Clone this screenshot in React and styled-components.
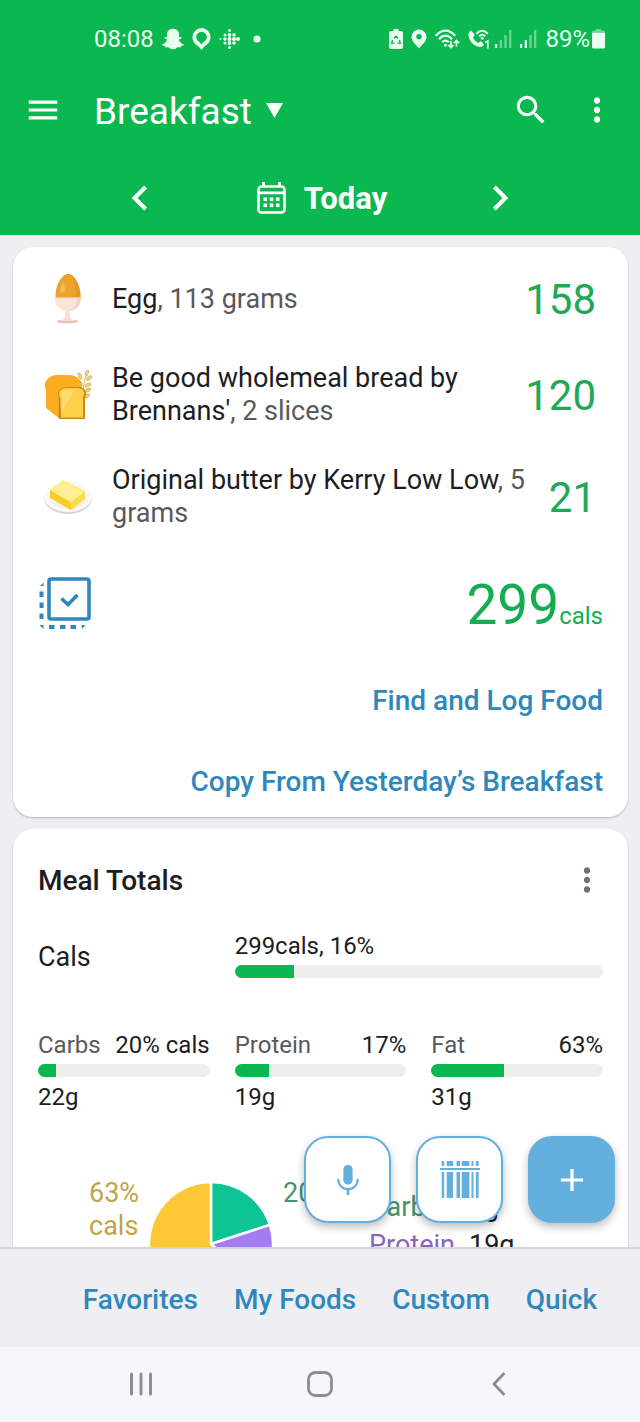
import React from "react";
import styled, { createGlobalStyle } from "styled-components";
import { FaSnapchatGhost } from "react-icons/fa";
import {
  MdAdd,
  MdChevronLeft,
  MdChevronRight,
  MdMenu,
  MdMoreVert,
  MdSearch,
} from "react-icons/md";

const GlobalStyle = createGlobalStyle`
  *, *::before, *::after { box-sizing: border-box; }
  body {
    margin: 0;
    background: #efeef3;
    color: #1d1d1f;
    font-family: Roboto, "Liberation Sans", sans-serif;
    font-size: 27px;
    line-height: 33px;
  }
  button, select { font: inherit; color: inherit; }
  svg { display: block; flex: none; }
`;

const Screen = styled.div`
  display: flex;
  flex-direction: column;
  height: 100vh;
`;

/* ---------- Header ---------- */

const Header = styled.header`
  flex: none;
  background: #0bb850;
  color: #fff;
`;

const StatusBar = styled.div`
  display: flex;
  justify-content: space-between;
  align-items: center;
  height: 78px;
  padding: 0 35px 0 94px;
  font-size: 24px;
  color: #e9fdf0;
`;

const StatusGroup = styled.div`
  display: flex;
  align-items: center;
  gap: ${(p) => p.$gap}px;
`;

const TitleBar = styled.div`
  display: flex;
  align-items: center;
  height: 64px;
  padding: 0 24px;
`;

const IconButton = styled.button`
  display: flex;
  align-items: center;
  justify-content: center;
  flex: none;
  width: ${(p) => p.$width || 38}px;
  height: ${(p) => p.$height || 38}px;
  padding: 0;
  border: 0;
  background: none;
  color: ${(p) => p.$color || "inherit"};
  cursor: pointer;
`;

const MealPicker = styled.label`
  display: flex;
  align-items: center;
  gap: 14px;
  margin: 0 auto 0 32px;
`;

const MealSelect = styled.select`
  appearance: none;
  padding: 4px 0 0;
  border: 0;
  background: none;
  font-size: 37px;
  line-height: 44px;
  cursor: pointer;

  option { color: #1d1d1f; }
`;

const TitleActions = styled.div`
  display: flex;
  gap: 28px;
`;

const DateBar = styled.div`
  display: grid;
  grid-template-columns: repeat(3, 1fr);
  place-items: center;
  height: 74px;
  margin-top: 19px;
  padding: 0 50px;
`;

const DateButton = styled.button`
  display: flex;
  align-items: center;
  gap: 18px;
  padding: 0 0 0 4px;
  border: 0;
  background: none;
  font-size: 31px;
  font-weight: 700;
  cursor: pointer;
`;

/* ---------- Content ---------- */

const Content = styled.div`
  position: relative;
  flex: 1;
  min-height: 0;
`;

const Scroller = styled.main`
  display: flex;
  flex-direction: column;
  gap: 12px;
  height: 100%;
  padding: 12px 12px 24px 13px;
  overflow-y: auto;
  scrollbar-width: none;
`;

const Card = styled.section`
  flex: none;
  padding: ${(p) => p.$padding};
  border-radius: 20px;
  background: #fff;
  box-shadow: 0 1px 2px rgba(30, 30, 50, 0.28);
`;

const FoodList = styled.ul`
  margin: 0;
  padding: 0;
  list-style: none;
`;

const FoodRow = styled.li`
  display: flex;
  align-items: center;
  min-height: 90px;
  padding: 18px 7px 18px 5px;
`;

const FoodIcon = styled.div`
  display: flex;
  justify-content: center;
  flex: none;
  width: 50px;
  margin-right: 19px;
`;

const FoodName = styled.p`
  flex: 1;
  margin: 0;
`;

const Amount = styled.span`
  color: #59595c;
`;

const FoodCals = styled.span`
  margin-left: 12px;
  font-size: 42px;
  color: #1fa956;
`;

const TotalRow = styled.div`
  display: flex;
  align-items: center;
  justify-content: space-between;
  height: 112px;
`;

const Total = styled.p`
  margin: 0;
  padding-top: 12px;
  font-size: 55px;
  line-height: 64px;
  color: #14ad52;
`;

const TotalUnit = styled.span`
  font-size: 24px;
`;

const LinkList = styled.div`
  display: flex;
  flex-direction: column;
  align-items: flex-end;
  gap: 48px;
  padding: 24px 0 19px;
`;

const TextLink = styled.a`
  color: #2f88bb;
  font-size: 28px;
  font-weight: 500;
  text-decoration: none;
`;

const CardHeader = styled.div`
  display: flex;
  align-items: center;
  justify-content: space-between;
  height: 40px;
`;

const CardTitle = styled.h2`
  margin: 0;
  font-size: 28px;
  font-weight: 500;
`;

const CalsRow = styled.div`
  display: grid;
  grid-template-columns: repeat(3, 1fr);
  column-gap: 25px;
  align-items: center;
  margin-top: 31px;
`;

const CalsMeter = styled.div`
  grid-column: span 2;
  font-size: 24px;
  line-height: 30px;
`;

const Macros = styled.div`
  display: grid;
  grid-template-columns: repeat(3, 1fr);
  column-gap: 25px;
  margin-top: 47px;
`;

const Macro = styled.div`
  font-size: 24px;
  line-height: 30px;
`;

const MacroHead = styled.div`
  display: flex;
  justify-content: space-between;
`;

const Track = styled.div`
  height: 13px;
  margin: 4px 0 5px;
  border-radius: 7px;
  background: #eeeeef;
  overflow: hidden;
`;

const Fill = styled.div`
  height: 100%;
  background: #0bb850;
`;

const Breakdown = styled.div`
  display: flex;
  align-items: flex-start;
  gap: 10px;
  margin-top: 65px;
  padding-left: 51px;
`;

const SliceLabel = styled.div`
  flex: none;
  width: ${(p) => p.$width}px;
  color: ${(p) => p.$color};
  white-space: ${(p) => (p.$nowrap ? "nowrap" : "normal")};
`;

const PieFrame = styled.div`
  padding-top: 5px;
`;

const Legend = styled.dl`
  margin: 0;
  padding-top: 11px;
`;

const LegendRow = styled.div`
  display: flex;
  gap: 14px;
  line-height: 38px;
`;

const LegendName = styled.dt`
  color: ${(p) => p.$color};
`;

const LegendValue = styled.dd`
  margin: 0;
`;

/* Buttons that float above the scrolling cards. */
const FloatingActions = styled.div`
  position: absolute;
  right: 25px;
  bottom: 24px;
  display: flex;
  gap: 25px;
`;

const Fab = styled.button`
  display: flex;
  align-items: center;
  justify-content: center;
  width: 87px;
  height: 87px;
  padding: 0;
  border: 2px solid #63afdd;
  border-radius: 24px;
  background: ${(p) => (p.$primary ? "#63afdd" : "#fff")};
  color: ${(p) => (p.$primary ? "#fff" : "#63afdd")};
  box-shadow: 0 4px 8px rgba(0, 0, 0, 0.26);
  cursor: pointer;
`;

/* ---------- Bottom bars ---------- */

const TabBar = styled.nav`
  display: flex;
  flex: none;
  align-items: center;
  justify-content: flex-end;
  gap: 36px;
  height: 100px;
  padding: 2px 43px 0;
  border-top: 2px solid #d5d4da;
  background: #efeef3;
`;

const SystemBar = styled.div`
  display: grid;
  flex: none;
  grid-template-columns: repeat(3, 1fr);
  place-items: center;
  height: 75px;
  padding: 0 52px 2px;
  background: #f4f8fd;
`;

/* ---------- Icons ---------- */

const LocationRing = () => (
  <svg width="19" height="22" viewBox="0 0 19 22" fill="currentColor" fillRule="evenodd">
    <path d="M9.5 0a9 9 0 0 1 9 9c0 4.500-2.600 7.600-6 9.300L9.500 22 6.500 18.300C3.100 16.600.5 13.500.5 9a9 9 0 0 1 9-9zm0 3.700A5.300 5.300 0 0 0 4.200 9c0 3.400 3.500 4.700 5.300 7.500 1.800-2.800 5.300-4.100 5.300-7.500a5.300 5.300 0 0 0-5.300-5.300z" />
  </svg>
);

const FITBIT_DOTS = [
  [1.5, 11, 1],
  [6, 7, 1.5], [6, 11, 1.7], [6, 15, 1.5],
  [10.5, 2.5, 1.5], [10.5, 7, 1.9], [10.5, 11, 2], [10.5, 15, 1.9], [10.5, 19.5, 1.5],
  [15, 7, 1.8], [15, 11, 2.1], [15, 15, 1.8],
  [19, 11, 2],
];

const FitnessDots = () => (
  <svg width="21" height="22" viewBox="0 0 21 22" fill="currentColor">
    {FITBIT_DOTS.map(([cx, cy, r]) => (
      <circle key={`${cx}-${cy}`} cx={cx} cy={cy} r={r} />
    ))}
  </svg>
);

const StatusDot = () => (
  <svg width="18" height="8" viewBox="0 0 18 8" fill="currentColor">
    <circle cx="9" cy="4" r="3.6" />
  </svg>
);

const BatterySaver = () => (
  <svg width="14" height="20" viewBox="0 0 14 20">
    <path d="M4.500 0h5v2H12a2 2 0 0 1 2 2v14a2 2 0 0 1-2 2H2a2 2 0 0 1-2-2V4a2 2 0 0 1 2-2h2.500z" fill="currentColor" />
    <path d="M5 9.500 7 7l2 2.500M10.300 11l1.200 3.200H8.500M5.500 14.200h-3L3.700 11" fill="none" stroke="#0bb850" strokeWidth="1.300" />
  </svg>
);

const LocationPin = () => (
  <svg width="16" height="20" viewBox="0 0 16 20" fill="currentColor" fillRule="evenodd">
    <path d="M8 .5A7.500 7.500 0 0 0 .5 8c0 5 5.500 8.500 7.500 11.500 2-3 7.500-6.500 7.500-11.500A7.500 7.500 0 0 0 8 .5zm0 4.500a2.700 2.700 0 1 1 0 5.400A2.700 2.700 0 0 1 8 5z" />
  </svg>
);

const WifiActive = () => (
  <svg width="25" height="20" viewBox="0 0 25 20" fill="none" stroke="currentColor" strokeWidth="2.200">
    <path d="M.8 6.800C6.500-.2 14.500-.2 20.200 6.800" />
    <path d="M4 10.200c4-4.700 9-4.700 13 0" />
    <path d="M7.200 13.300c2-2.200 4.600-2.200 6.600 0" />
    <circle cx="10.500" cy="16.200" r="1.500" fill="currentColor" stroke="none" />
    <path d="M16 12v6M13.500 15.800l2.500 2.700 2.500-2.700M21.500 17.500V12M19 14.200l2.500-2.700 2.500 2.700" strokeWidth="1.700" />
  </svg>
);

const WifiCalling = () => (
  <svg width="22" height="20" viewBox="0 0 22 20">
    <path d="M3.500 1.500 6.800 6 4.900 8.500c1.200 2.500 3 4.300 5.400 5.400l2.500-1.900 3.200 3.500c-.8 2-2.700 2.800-4.800 2.400C5.500 16.800 1 12 .4 6.300.3 4 1.500 2.200 3.500 1.500z" fill="currentColor" />
    <path d="M8.500 5c3-4.200 8.200-4.200 11.200 0M11.300 7.500c1.700-2.200 4.200-2.200 5.900 0" fill="none" stroke="currentColor" strokeWidth="2" />
    <circle cx="14.200" cy="9.300" r="1.400" fill="currentColor" />
    <path d="M17 13.500l2.800-1.500v7.500" fill="none" stroke="currentColor" strokeWidth="1.700" />
  </svg>
);

const Signal = ({ level }) => (
  <svg width="17" height="18" viewBox="0 0 17 18" fill="currentColor">
    {[4, 8, 13, 18].map((height, i) => (
      <rect key={height} x={i * 4.7} y={18 - height} width="2.200" height={height} opacity={i < level ? 1 : 0.45} />
    ))}
  </svg>
);

const Battery = () => (
  <svg width="13" height="20" viewBox="0 0 13 20" fill="currentColor">
    <path d="M4 0h5v1.500h2.500A1.500 1.500 0 0 1 13 3H0a1.500 1.500 0 0 1 1.500-1.500H4z" opacity="0.45" />
    <path d="M0 3.500h13V18a1.500 1.500 0 0 1-1.500 1.500h-10A1.500 1.500 0 0 1 0 18z" />
  </svg>
);

const Caret = () => (
  <svg width="17" height="15" viewBox="0 0 17 15" fill="currentColor">
    <path d="M0 0h17L8.500 15z" />
  </svg>
);

const CalendarIcon = () => (
  <svg width="29" height="32" viewBox="0 0 29 32">
    <rect x="1.500" y="4.500" width="26" height="26" rx="3" fill="none" stroke="currentColor" strokeWidth="2.600" />
    <path d="M6.500 0v5M22.500 0v5M2 10.800h25" stroke="currentColor" strokeWidth="2.800" />
    <g fill="currentColor">
      {[6.5, 12.7, 18.9].map((x) => (
        <React.Fragment key={x}>
          <rect x={x} y="15.500" width="3.600" height="3.600" />
          <rect x={x} y="21.500" width="3.600" height="3.600" />
        </React.Fragment>
      ))}
    </g>
  </svg>
);

const EggIcon = () => (
  <svg width="28" height="50" viewBox="0 0 28 50">
    <ellipse cx="13.500" cy="47.300" rx="11" ry="1.900" fill="#e9bfae" />
    <path d="M11.500 35h4l.8 9c.5 1.500 3 2 6 3H5c3-1 5-1.500 5.500-3z" fill="#f8dfd2" />
    <path d="M1.500 24C1 10 8.500 0 14 0s13 10 12.500 24z" fill="#eda22c" />
    <path d="M14 0c7 3 8 15 7 24h5.500C27 10 19.500 0 14 0z" fill="#e6992a" />
    <path d="M9.500 8c-3 3-4.500 8-2.500 10.500 2 1.200 4-1 4-4z" fill="#f4ba5c" />
    <path d="M1 23.500h25.500C27.500 32 21 37 14 37S0 32 1 23.500z" fill="#fbe3d7" />
    <path d="M23 23.500h3.500C27.500 32 21 37 14 37c6-2 9-6 9-13.500z" fill="#f1d2c4" />
  </svg>
);

const BreadIcon = () => (
  <svg width="48" height="50" viewBox="0 0 48 50">
    <g stroke="#d9bb60" strokeWidth="1" fill="#ead590">
      <path d="M42 2c-1 9-3 17-5 25" fill="none" />
      <ellipse cx="43" cy="3" rx="1.300" ry="2.800" transform="rotate(20 43 3)" />
      <ellipse cx="36" cy="6" rx="1.500" ry="3.200" transform="rotate(-25 36 6)" />
      <ellipse cx="45" cy="8" rx="1.500" ry="2.800" transform="rotate(55 45 8)" />
      <ellipse cx="36" cy="13" rx="1.500" ry="3.200" transform="rotate(-35 36 13)" />
      <ellipse cx="44" cy="15" rx="1.500" ry="2.800" transform="rotate(60 44 15)" />
      <ellipse cx="44" cy="20" rx="1.500" ry="3" transform="rotate(60 44 20)" />
      <ellipse cx="43" cy="26" rx="1.500" ry="2.800" transform="rotate(60 43 26)" />
    </g>
    <path d="M2 20C-2 14 3 6 12 5h13c8 0 13 5 13 12v18L16 49 2 38z" fill="#f9ae22" />
    <path d="M15 28c-3-6 1-11 8-11h11c7 0 10 5 7 11v21H16z" fill="#ce861f" />
    <path d="M16 27c-3-5 1-9 7-9h10c6 0 9 4 6 9v20.500H17z" fill="#fdd04a" />
    <path d="M18 26c-2-4 1-6 5-6h7L18 42z" fill="#fddb6c" />
    <path d="M15.500 28v20.500" stroke="#c9801b" strokeWidth="1.500" />
  </svg>
);

const ButterIcon = () => (
  <svg width="50" height="36" viewBox="0 0 50 36">
    <ellipse cx="25" cy="19" rx="24" ry="16" fill="#dfd0d2" />
    <ellipse cx="25" cy="17.500" rx="24" ry="15.500" fill="#fbf8f8" />
    <ellipse cx="25" cy="18" rx="19" ry="12" fill="#f5efee" />
    <path d="M7 11 28 23v8L7 19z" fill="#fbcc25" />
    <path d="M28 23 42 12v8L28 31z" fill="#fddd45" />
    <path d="M7 11 20 1l22 11-14 11z" fill="#fdee86" />
    <path d="M13 11 20 5l15 7-8 6z" fill="#fef09a" />
  </svg>
);

const SelectItemsIcon = () => (
  <svg width="54" height="54" viewBox="0 0 54 54" fill="none" stroke="#2f88bb">
    <rect x="11" y="2" width="40" height="40" rx="2" strokeWidth="3.600" />
    <path d="M23.500 21.500 30 27.500 39.500 18" strokeWidth="3.600" />
    <path d="M3.500 14.500v5.500M3.500 25.500V31M3.500 36.500V42M11 50h5.500M22 50h5.500M32.500 50H38" strokeWidth="4" />
    <path d="M2 9h3.500V5.500zM1.500 48h4v4zM43.500 48h4l-3.500 4z" fill="#2f88bb" stroke="none" />
  </svg>
);

const MicIcon = () => (
  <svg width="22" height="30" viewBox="0 0 22 30" fill="none" stroke="currentColor">
    <rect x="6.400" y="0" width="9.200" height="19.500" rx="4.600" fill="currentColor" stroke="none" />
    <path d="M1.200 14c0 6 4.200 10.200 9.800 10.200S20.800 20 20.800 14" strokeWidth="2.200" />
    <path d="M11 24v6" strokeWidth="2.600" />
  </svg>
);

const BarcodeIcon = () => (
  <svg width="40" height="37" viewBox="0 0 40 37" fill="currentColor">
    {[[1.7, 2.5], [6.7, 6.3], [16.5, 3.5], [21.7, 7.7], [31.5, 2], [35.8, 2.8]].map(([x, width]) => (
      <React.Fragment key={x}>
        <rect x={x} y="0" width={width} height="5" />
        <rect x={x} y="11" width={width} height="26" />
      </React.Fragment>
    ))}
    <rect x="0" y="7" width="40" height="2" />
  </svg>
);

const RecentsIcon = () => (
  <svg width="24" height="24" viewBox="0 0 24 24" stroke="#8b8e92" strokeWidth="3" strokeLinecap="round">
    <path d="M2.500 2v20M12 2v20M21.500 2v20" />
  </svg>
);

const HomeIcon = () => (
  <svg width="26" height="26" viewBox="0 0 26 26" fill="none" stroke="#8b8e92" strokeWidth="2.800">
    <rect x="1.500" y="1.500" width="23" height="23" rx="7" />
  </svg>
);

const BackIcon = () => (
  <svg width="14" height="24" viewBox="0 0 14 24" fill="none" stroke="#8b8e92" strokeWidth="2.800">
    <path d="M12.500 1 2 12l10.500 11" />
  </svg>
);

/* ---------- Data ---------- */

const FOODS = [
  { name: "Egg", amount: "113 grams", cals: 158, Icon: EggIcon },
  { name: "Be good wholemeal bread by Brennans'", amount: "2 slices", cals: 120, Icon: BreadIcon },
  { name: "Original butter by Kerry Low Low", amount: "5 grams", cals: 21, Icon: ButterIcon },
];

const MACROS = [
  { name: "Carbs", share: "20% cals", progress: 10.5, grams: "22g" },
  { name: "Protein", share: "17%", progress: 20, grams: "19g" },
  { name: "Fat", share: "63%", progress: 42.5, grams: "31g" },
];

const SLICES = [
  { share: 0.2, color: "#0dc594" },
  { share: 0.17, color: "#a57bf2" },
  { share: 0.63, color: "#ffc736" },
];

const pointAt = (turn, r) => {
  const angle = turn * 2 * Math.PI;
  return `${r + r * Math.sin(angle)} ${r - r * Math.cos(angle)}`;
};

function MacroPie() {
  const r = 62;
  let start = 0;
  return (
    <svg width="124" height="124" viewBox="0 0 124 124" role="img" aria-label="Calories by macronutrient">
      {SLICES.map(({ share, color }) => {
        const end = start + share;
        const d = `M${r} ${r}L${pointAt(start, r)}A${r} ${r} 0 ${share > 0.5 ? 1 : 0} 1 ${pointAt(end, r)}Z`;
        start = end;
        return <path key={color} d={d} fill={color} stroke="#fff" strokeWidth="2.500" />;
      })}
    </svg>
  );
}

function Meter({ label, value }) {
  return (
    <Track role="progressbar" aria-label={label} aria-valuenow={value} aria-valuemin={0} aria-valuemax={100}>
      <Fill style={{ width: `${value}%` }} />
    </Track>
  );
}

export default function App() {
  return (
    <>
      <GlobalStyle />
      <Screen>
        <Header>
          <StatusBar>
            <StatusGroup $gap={8}>
              <span>08:08</span>
              <FaSnapchatGhost size={22} />
              <LocationRing />
              <FitnessDots />
              <StatusDot />
            </StatusGroup>
            <StatusGroup $gap={8}>
              <BatterySaver />
              <LocationPin />
              <WifiActive />
              <StatusGroup $gap={5}>
                <WifiCalling />
                <Signal level={1} />
              </StatusGroup>
              <Signal level={2} />
              <StatusGroup $gap={2}>
                <span>89%</span>
                <Battery />
              </StatusGroup>
            </StatusGroup>
          </StatusBar>
          <TitleBar>
            <IconButton aria-label="Menu">
              <MdMenu size={38} />
            </IconButton>
            <MealPicker>
              <MealSelect aria-label="Meal" defaultValue="Breakfast">
                <option>Breakfast</option>
                <option>Lunch</option>
                <option>Dinner</option>
                <option>Snacks</option>
              </MealSelect>
              <Caret />
            </MealPicker>
            <TitleActions>
              <IconButton aria-label="Search">
                <MdSearch size={38} />
              </IconButton>
              <IconButton aria-label="More options">
                <MdMoreVert size={38} />
              </IconButton>
            </TitleActions>
          </TitleBar>
          <DateBar>
            <IconButton aria-label="Previous day" $width={50} $height={50}>
              <MdChevronLeft size={50} />
            </IconButton>
            <DateButton>
              <CalendarIcon />
              Today
            </DateButton>
            <IconButton aria-label="Next day" $width={50} $height={50}>
              <MdChevronRight size={50} />
            </IconButton>
          </DateBar>
        </Header>

        <Content>
          <Scroller>
            <Card $padding="7px 25px 0">
              <FoodList>
                {FOODS.map(({ name, amount, cals, Icon }) => (
                  <FoodRow key={name}>
                    <FoodIcon>
                      <Icon />
                    </FoodIcon>
                    <FoodName>
                      {name}
                      <Amount>, {amount}</Amount>
                    </FoodName>
                    <FoodCals>{cals}</FoodCals>
                  </FoodRow>
                ))}
              </FoodList>
              <TotalRow>
                <IconButton aria-label="Select foods" $width={54} $height={54}>
                  <SelectItemsIcon />
                </IconButton>
                <Total>
                  299<TotalUnit>cals</TotalUnit>
                </Total>
              </TotalRow>
              <LinkList>
                <TextLink href="#find">Find and Log Food</TextLink>
                <TextLink href="#copy">Copy From Yesterday’s Breakfast</TextLink>
              </LinkList>
            </Card>

            <Card $padding="31px 25px">
              <CardHeader>
                <CardTitle>Meal Totals</CardTitle>
                <IconButton aria-label="Meal totals options" $width={32} $color="#6f6f73">
                  <MdMoreVert size={38} />
                </IconButton>
              </CardHeader>
              <CalsRow>
                <span>Cals</span>
                <CalsMeter>
                  299cals, 16%
                  <Meter label="Cals" value={16} />
                </CalsMeter>
              </CalsRow>
              <Macros>
                {MACROS.map(({ name, share, progress, grams }) => (
                  <Macro key={name}>
                    <MacroHead>
                      <Amount>{name}</Amount>
                      <span>{share}</span>
                    </MacroHead>
                    <Meter label={name} value={progress} />
                    {grams}
                  </Macro>
                ))}
              </Macros>
              <Breakdown>
                <SliceLabel $width={50} $color="#c2a546">63% cals</SliceLabel>
                <PieFrame>
                  <MacroPie />
                </PieFrame>
                <SliceLabel $width={76} $color="#45946c" $nowrap>20% cals</SliceLabel>
                <Legend>
                  <LegendRow>
                    <LegendName $color="#45946c">Carbs</LegendName>
                    <LegendValue>22g</LegendValue>
                  </LegendRow>
                  <LegendRow>
                    <LegendName $color="#8866bd">Protein</LegendName>
                    <LegendValue>19g</LegendValue>
                  </LegendRow>
                </Legend>
              </Breakdown>
            </Card>
          </Scroller>

          <FloatingActions>
            <Fab aria-label="Log by voice">
              <MicIcon />
            </Fab>
            <Fab aria-label="Scan barcode">
              <BarcodeIcon />
            </Fab>
            <Fab aria-label="Add food" $primary>
              <MdAdd size={38} />
            </Fab>
          </FloatingActions>
        </Content>

        <TabBar>
          <TextLink href="#favorites">Favorites</TextLink>
          <TextLink href="#my-foods">My Foods</TextLink>
          <TextLink href="#custom">Custom</TextLink>
          <TextLink href="#quick">Quick</TextLink>
        </TabBar>
        <SystemBar>
          <IconButton aria-label="Recent apps">
            <RecentsIcon />
          </IconButton>
          <IconButton aria-label="Home">
            <HomeIcon />
          </IconButton>
          <IconButton aria-label="Back">
            <BackIcon />
          </IconButton>
        </SystemBar>
      </Screen>
    </>
  );
}
